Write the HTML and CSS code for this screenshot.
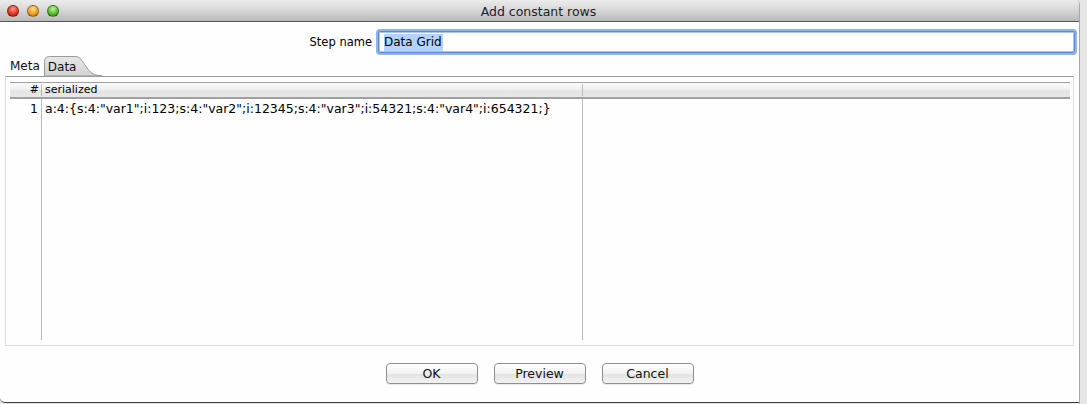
FILE: index.html
```html
<!DOCTYPE html>
<html>
<head>
<meta charset="utf-8">
<link rel="stylesheet" href="styles.css">
</head>
<body>
<div class="window">
  <div class="titlebar">
    <div class="lights">
      <span class="light red"></span>
      <span class="light orange"></span>
      <span class="light green"></span>
    </div>
    <div class="title">Add constant rows</div>
  </div>
  <div class="content">
    <div class="step-row">
      <label class="step-label">Step name</label>
      <div class="step-input"><span class="sel">Data Grid</span></div>
    </div>
    <div class="tabs">
      <span class="tab">Meta</span>
      <span class="tab active">
        <svg class="tab-shape" width="58" height="20" viewBox="0 0 58 20">
          <defs>
            <linearGradient id="tg" x1="0" y1="0" x2="0" y2="1">
              <stop offset="0" stop-color="#e6e6e6"/>
              <stop offset="1" stop-color="#d2d2d2"/>
            </linearGradient>
          </defs>
          <path d="M0.5 20 V5.5 Q0.5 0.5 5.5 0.5 H32 C40 0.5 42 19.5 55 19.5 H58 V20 Z" fill="url(#tg)" stroke="#9a9a9a" stroke-width="1"/>
        </svg>
        <span class="tab-text">Data</span>
      </span>
    </div>
    <div class="panel">
      <div class="grid">
        <div class="grid-head">
          <div class="c1">#</div>
          <div class="c2">serialized</div>
          <div class="c3"></div>
        </div>
        <div class="grid-body">
          <div class="c1"><div class="cell">1</div></div>
          <div class="c2"><div class="cell">a:4:{s:4:"var1";i:123;s:4:"var2";i:12345;s:4:"var3";i:54321;s:4:"var4";i:654321;}</div></div>
          <div class="c3"></div>
        </div>
      </div>
    </div>
    <div class="buttons">
      <button class="btn">OK</button>
      <button class="btn">Preview</button>
      <button class="btn">Cancel</button>
    </div>
  </div>
</div>
</body>
</html>
```

FILE: styles.css
```css
html, body {
  margin: 0;
  padding: 0;
}
body {
  background: #e6e6e6;
  width: 1087px;
  height: 404px;
  overflow: hidden;
  font-family: "DejaVu Sans", Verdana, sans-serif;
  font-size: 12px;
  color: #000;
}
.window {
  width: 1079px;
  height: 402px;
  background: #fefefe;
  border-right: 1px solid #a8a8a8;
  border-bottom: 1px solid #3a3a3a;
  border-radius: 5px 5px 0 5px;
  display: flex;
  flex-direction: column;
  overflow: hidden;
}
.titlebar {
  height: 21px;
  flex: none;
  background: linear-gradient(#ececec, #d6d6d6 50%, #b9b9b9);
  border-bottom: 1px solid #555;
  position: relative;
  display: flex;
  align-items: center;
  justify-content: center;
}
.lights {
  position: absolute;
  left: 7px;
  top: 5px;
  display: flex;
  gap: 8px;
}
.light {
  width: 12px;
  height: 12px;
  border-radius: 50%;
  box-sizing: border-box;
  border: 1px solid rgba(0,0,0,0.35);
}
.red { background: radial-gradient(circle at 50% 30%, #ff9b93, #e2392b 55%, #a5140c); }
.orange { background: radial-gradient(circle at 50% 30%, #ffe08a, #f0a12a 55%, #b86a06); }
.green { background: radial-gradient(circle at 50% 30%, #c7f59a, #5cbc35 55%, #2f7c12); }
.title {
  font-size: 12.5px;
  color: #222;
  padding-right: 2px;
  padding-top: 1px;
}
.content {
  flex: 1;
  display: flex;
  flex-direction: column;
}
.step-row {
  display: flex;
  align-items: center;
  margin-top: 9px;
  height: 22px;
}
.step-label {
  text-align: right;
  padding-right: 6px;
  box-sizing: border-box;
  width: 378px;
  font-size: 11.5px;
}
.step-input {
  width: 697px;
  height: 22px;
  box-sizing: border-box;
  border: 1px solid #5b8ad0;
  box-shadow: 0 0 0 2px #8fb5e6, inset 0 0 0 1px #a8c6ec;
  border-radius: 2px;
  background: #fff;
  display: flex;
  align-items: center;
  padding-left: 5px;
}
.sel {
  background: #b3d3fb;
  padding: 1px 1px 2px 0;
  font-size: 12px;
}
.tabs {
  display: flex;
  align-items: flex-end;
  margin-top: 3px;
  height: 20px;
  padding-left: 10px;
}
.tab {
  height: 19px;
  line-height: 19px;
  font-size: 12px;
  color: #111;
}
.tab.active {
  position: relative;
  width: 58px;
  height: 20px;
  margin-left: 4px;
}
.tab-shape {
  position: absolute;
  left: 0;
  top: 0;
}
.tab-text {
  position: relative;
  padding-left: 4px;
  line-height: 22px;
}
.panel {
  margin: 0 5px 0 5px;
  width: 1069px;
  height: 270px;
  box-sizing: border-box;
  border: 1px solid #dcdcdc;
  border-top: 1px solid #9a9a9a;
  padding: 5px 3px 4px 4px;
}
.grid {
  height: 100%;
  display: flex;
  flex-direction: column;
}
.grid-head {
  display: flex;
  height: 14px;
  border-top: 1px solid #a0a0a0;
  border-bottom: 2px solid #a0a0a0;
  background: linear-gradient(#fafafa, #f2f2f2 40%, #e4e4e4 60%, #e8e8e8);
  font-size: 11px;
  line-height: 14px;
}
.c1 { width: 32px; flex: none; box-sizing: border-box; }
.c2 { width: 541px; flex: none; box-sizing: border-box; }
.c3 { flex: 1; }
.grid-head .c1 {
  text-align: right;
  padding-right: 2px;
  border-right: 1px solid #bbb;
  margin: 1px 0;
  line-height: 12px;
}
.grid-head .c2 {
  padding-left: 3px;
  border-right: 1px solid #bbb;
  margin: 1px 0;
  line-height: 12px;
}
.grid-body {
  flex: 1;
  display: flex;
  margin-bottom: 1px;
}
.grid-body .c1, .grid-body .c2 {
  border-right: 1px solid #b8b8b8;
}
.cell {
  height: 19px;
  line-height: 19px;
  font-size: 12.5px;
}
.grid-body .c1 .cell {
  text-align: right;
  padding-right: 3px;
}
.grid-body .c2 .cell {
  padding-left: 3px;
  white-space: nowrap;
}
.buttons {
  display: flex;
  justify-content: center;
  gap: 16px;
  margin-top: 17px;
}
.btn {
  width: 92px;
  height: 21px;
  font-family: "DejaVu Sans", Verdana, sans-serif;
  font-size: 12.5px;
  color: #111;
  border: 1px solid #8e8e8e;
  border-radius: 4px;
  background: linear-gradient(#ffffff, #f1f1f1 50%, #e2e2e2 51%, #f2f2f2);
  padding: 0;
  box-shadow: 0 1px 0 rgba(0,0,0,0.08);
}
```
